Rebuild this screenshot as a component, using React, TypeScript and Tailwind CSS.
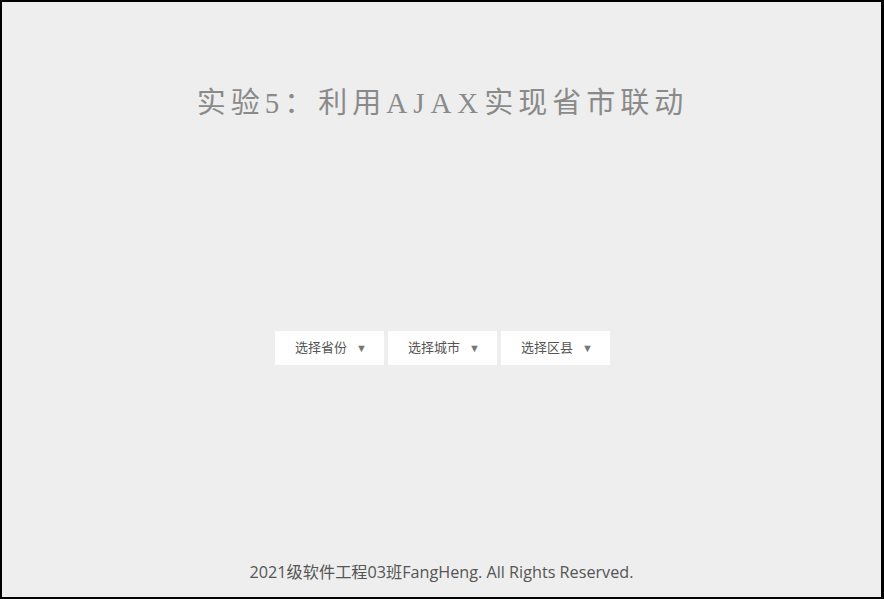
import React from 'react';

const SELECTS = ['选择省份', '选择城市', '选择区县'];

const App: React.FC = () => {
  return (
    <div className="w-[884px] h-[599px] border-2 border-r-[3px] border-black bg-[#eeeeee] flex flex-col items-center overflow-hidden">
      {/* Title */}
      <h1
        className="mt-[82px] ml-[2px] text-[29px] leading-[38px] tracking-[5px] text-[#8a8a8a]"
        style={{ fontFamily: '"Liberation Serif", "Noto Sans CJK SC", serif' }}
      >
        实验5：利用<span className="tracking-[6px]">AJAX</span>实现省市联动
      </h1>

      {/* Select boxes */}
      <div className="mt-[209px] ml-[2px] flex gap-[4px]">
        {SELECTS.map((label) => (
          <div
            key={label}
            className="w-[109px] h-[34px] bg-white flex items-center pl-[20px] text-[13px] text-[#555555]"
            style={{ fontFamily: '"Liberation Serif", "Noto Sans CJK SC", serif' }}
          >
            <span>{label}</span>
            <span className="ml-[9px] text-[11px] text-[#777777]">▼</span>
          </div>
        ))}
      </div>

      <div className="flex-1" />

      {/* Footer */}
      <footer
        className="mb-[14px] text-[16.2px] leading-[22px] text-[#555555]"
        style={{ fontFamily: '"Open Sans", "Noto Sans CJK SC", sans-serif' }}
      >
        2021级软件工程03班FangHeng. All Rights Reserved.
      </footer>
    </div>
  );
};

export default App;
